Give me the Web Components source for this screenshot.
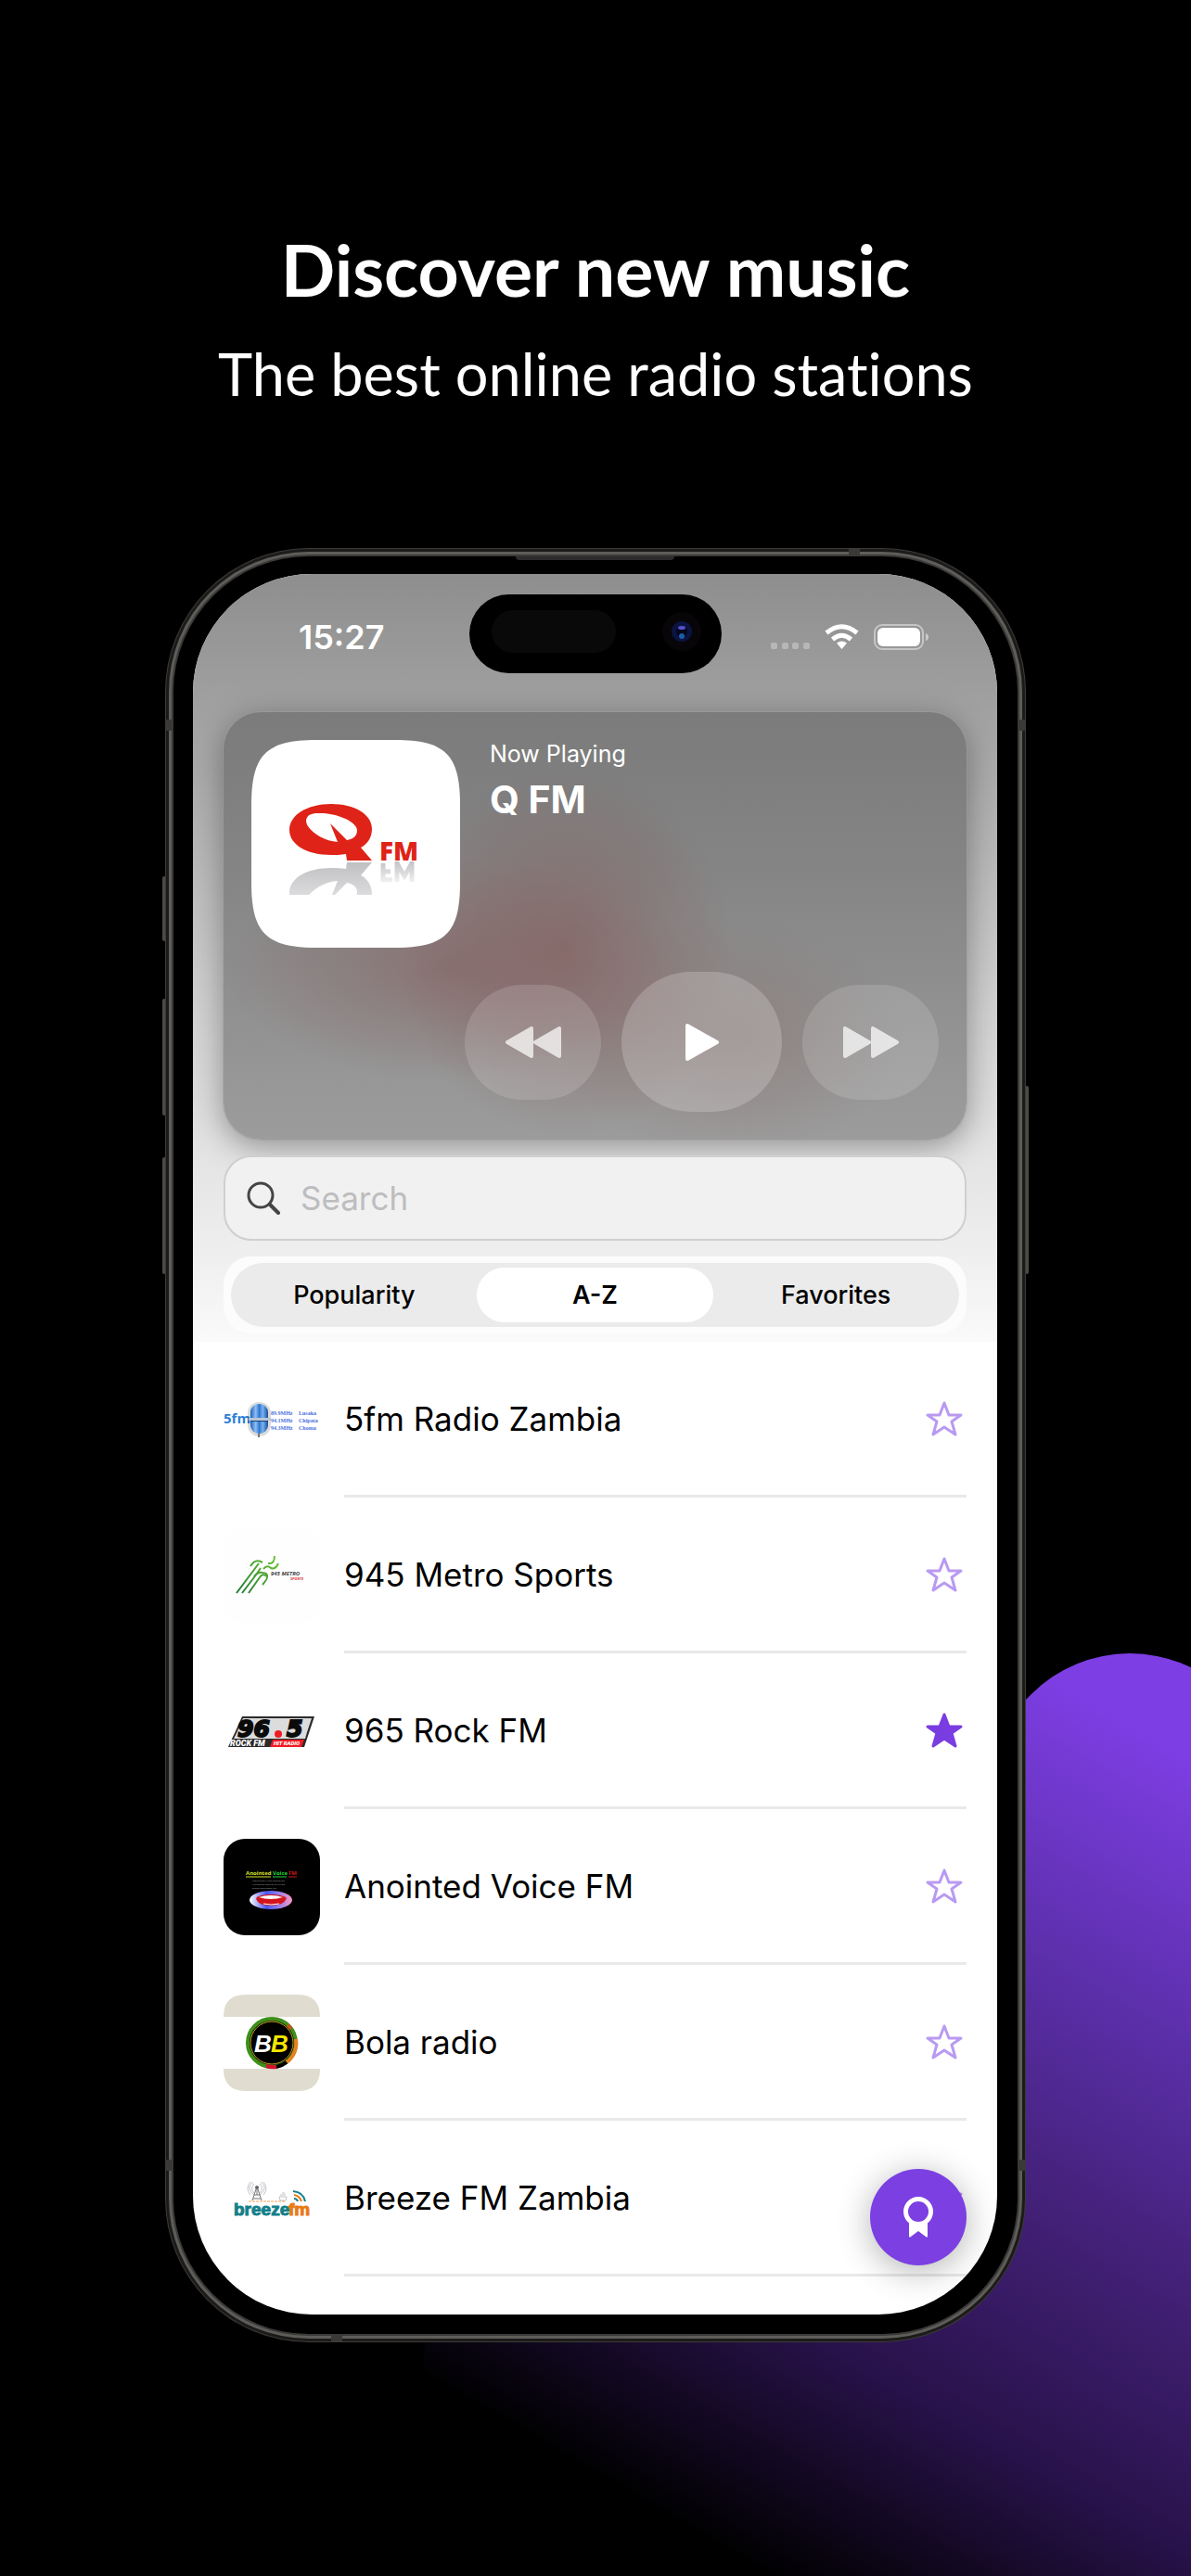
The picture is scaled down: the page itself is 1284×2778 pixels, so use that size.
<!DOCTYPE html>
<html lang="en">
<head>
<meta charset="utf-8">
<meta name="viewport" content="width=device-width, initial-scale=1">
<title>Discover new music</title>
<style>
  html { background: #000; }
  body { margin: 0; }
</style>
</head>
<body>
<promo-page>
  <h1 slot="title">Discover new music</h1>
  <p slot="subtitle">The best online radio stations</p>

  <phone-frame>
    <status-bar slot="header" time="15:27"></status-bar>
    <now-playing slot="header" label="Now Playing" station="Q FM"></now-playing>
    <search-field slot="header" placeholder="Search"></search-field>
    <sort-tabs slot="header" options="Popularity,A-Z,Favorites" selected="A-Z"></sort-tabs>

    <station-row>5fm Radio Zambia
      <svg slot="logo" viewBox="0 0 104 104" aria-hidden="true">
        <defs><linearGradient id="mic"><stop offset="0" stop-color="#1d62b8"/><stop offset=".3" stop-color="#8fc0f5"/><stop offset=".5" stop-color="#2f78d0"/><stop offset=".7" stop-color="#7db2ee"/><stop offset="1" stop-color="#154f9e"/></linearGradient></defs>
        <text x="0" y="56" font-family="Open Sans, sans-serif" font-weight="700" font-size="15" fill="#2f7fd6">5fm</text>
        <rect x="26" y="33" width="25" height="37" rx="12" fill="#000" opacity=".14"/>
        <rect x="29" y="35" width="19" height="32" rx="9" fill="url(#mic)"/>
        <rect x="27" y="50" width="24" height="3" rx="1" fill="#b9c6d6"/>
        <rect x="29" y="53" width="19" height="1" fill="#16407c"/>
        <path d="M38 67v4" stroke="#777" stroke-width="2"/>
        <g font-family="Liberation Serif, serif" font-weight="700" font-size="6" fill="#4a70dc"><text x="51" y="47">89.9MHz</text><text x="81" y="47">Lusaka</text><text x="51" y="55">94.1MHz</text><text x="81" y="55">Chipata</text><text x="51" y="63">94.3MHz</text><text x="81" y="63">Choma</text></g>
      </svg>
    </station-row>
    <station-row>945 Metro Sports
      <svg slot="logo" viewBox="0 0 104 104" aria-hidden="true">
        <defs><linearGradient id="run" gradientUnits="userSpaceOnUse" x1="14" y1="71" x2="59" y2="33"><stop offset="0" stop-color="#1f7a33"/><stop offset="1" stop-color="#6fc437"/></linearGradient></defs>
        <rect width="104" height="104" rx="22" fill="#fefefe"/>
        <g fill="none" stroke="url(#run)" stroke-width="2"><path d="M29 42q5-8 11-5l2 1"/><path d="M48 39q7 1 7-8"/><path d="M43 45q4-5 8-1q5 2 8-5"/><path d="M14 71L38 39"/><path d="M20 71L36 50l4-6"/><path d="M27 71L39 54q3-5 8-1q1 2-5 9"/><path d="M33 53q4-5 9-4q6 0 5 5"/></g>
        <text x="51" y="52" font-family="Open Sans, sans-serif" font-weight="700" font-style="italic" font-size="6" fill="#444">945 METRO</text>
        <text x="72" y="57" font-family="Open Sans, sans-serif" font-weight="700" font-style="italic" font-size="4" fill="#e0303a">SPORTS</text>
      </svg>
    </station-row>
    <station-row favorite>965 Rock FM
      <svg slot="logo" viewBox="0 0 104 104" aria-hidden="true">
        <path d="M20 36H98L92 54L87 69H5L9 60L12 54Z" fill="#2b2b2b"/>
        <path d="M21 38H95L90 53L88 60H11L14 54Z" fill="#dcdcdc"/>
        <g font-family="DejaVu Sans, sans-serif" font-weight="700" font-style="italic" font-size="25" fill="#0b0b0b" stroke="#0b0b0b" stroke-width="2"><text x="15" y="58">96</text><text x="68" y="58">5</text></g>
        <path d="M53 61H87L84 69H50Z" fill="#ee1c25"/>
        <circle cx="59" cy="55" r="4" fill="#ee1c25"/>
        <text x="7" y="68" font-family="Roboto, sans-serif" font-weight="900" font-style="italic" font-size="9" fill="#fff">ROCK FM</text>
        <text x="54" y="67" font-family="Roboto, sans-serif" font-weight="900" font-style="italic" font-size="6" fill="#fff">HIT RADIO</text>
      </svg>
    </station-row>
    <station-row>Anointed Voice FM
      <svg slot="logo" viewBox="0 0 104 104" aria-hidden="true">
        <defs><linearGradient id="ring"><stop offset="0" stop-color="#fff"/><stop offset=".4" stop-color="#4a55f0"/><stop offset=".65" stop-color="#8a7bf0"/><stop offset="1" stop-color="#f59ac4"/></linearGradient></defs>
        <rect width="104" height="104" rx="23" fill="#000"/>
        <g font-family="Open Sans, sans-serif" font-weight="700" font-size="6"><text x="24" y="39" fill="#d8e02a">Anointed</text><text x="53" y="39" fill="#22d63a">Voice</text><text x="70" y="39" fill="#c81a1a">FM</text></g>
        <path d="M24 41H51" stroke="#d8e02a"/><path d="M53 41H68" stroke="#22d63a"/><path d="M70 41H79" stroke="#c81a1a"/>
        <g font-family="Lato, sans-serif" font-size="2" fill="#aaa"><text x="31" y="46">Praise the Lord! My soul, praise the Lord</text><text x="31" y="50">I will praise the Lord all my life I will sing</text><text x="31" y="54">praises to him as long as I live.</text></g>
        <ellipse cx="51" cy="66" rx="23" ry="10" fill="url(#ring)"/>
        <path d="M35 64q4-4 16-4t17 4q-3 8-17 8t-16-8Z" fill="#d4141c"/>
        <path d="M38 63q6-2 13-2t13 2q-6 2-13 2t-13-2Z" fill="#fff"/>
        <path d="M43 70q8 2 17 0" stroke="#fff" fill="none"/>
      </svg>
    </station-row>
    <station-row>Bola radio
      <svg slot="logo" viewBox="0 0 104 104" aria-hidden="true">
        <path d="M0 24Q0 0 24 0H80Q104 0 104 24Z" fill="#e0dccf"/><path d="M0 80Q0 104 24 104H80Q104 104 104 80Z" fill="#e0dccf"/>
        <circle cx="52" cy="52" r="26" fill="#000" stroke="#3f8f1a" stroke-width="4"/>
        <path d="M78 48A26 26 0 0 1 68 73" stroke="#e8801c" stroke-width="4" fill="none"/>
        <path d="M68 73A26 26 0 0 1 57 78" stroke="#000" stroke-width="4" fill="none"/>
        <path d="M57 78A26 26 0 0 1 46 77" stroke="#d8102c" stroke-width="4" fill="none"/>
        <path d="M69 33A26 26 0 0 1 73 37" stroke="#c2561c" stroke-width="4" fill="none"/>
        <circle cx="52" cy="52" r="23" fill="none" stroke="#c8a81e"/>
        <text x="33" y="62" font-family="Liberation Sans, sans-serif" font-weight="700" font-style="italic" font-size="26" fill="#fff">B</text>
        <text x="51" y="62" font-family="Liberation Sans, sans-serif" font-weight="700" font-style="italic" font-size="26" fill="#f5e500">B</text>
      </svg>
    </station-row>
    <station-row>Breeze FM Zambia
      <svg slot="logo" viewBox="0 0 104 104" aria-hidden="true">
        <g fill="none" stroke="#c4c4cc"><path d="M32 34q-9 6 1 14M29 34q-6 7 0 14M33 36q-5 5 0 10M40 34q9 6-1 14M43 34q6 7 0 14M39 36q5 5 0 10"/></g>
        <path d="M36 39L31 54M36 39L41 54M33 48h6M32 52h8M36 39v9" stroke="#777" fill="none"/><circle cx="36" cy="40" r="2" fill="#666"/>
        <path d="M60 50h8l-1 4h-6ZM61 48h6M63 46h3" fill="none" stroke="#c4c4c4"/>
        <path d="M27 55H67" stroke="#f0a35c" stroke-dasharray="3 1"/>
        <g fill="none" stroke-width="2"><path d="M76 48q6 1 8 7" stroke="#ea7a12"/><path d="M76 52q3 0 4 3" stroke="#13808a"/><path d="M75 44q11 1 13 11" stroke="#13808a"/></g>
        <g font-family="Liberation Sans, sans-serif" font-weight="700" font-size="19" stroke-width="1"><text x="11" y="70" fill="#13808a" stroke="#13808a">breeze</text>
        <text x="70" y="70" fill="#ea7a12" stroke="#ea7a12">fm</text></g>
      </svg>
    </station-row>

    <award-button slot="floating"></award-button>
  </phone-frame>
</promo-page>

<script>
const define = (name, markup, setup) => {
  const template = document.createElement('template');
  template.innerHTML = markup;
  customElements.define(name, class extends HTMLElement {
    constructor() {
      super();
      this.attachShadow({ mode: 'open' }).append(template.content.cloneNode(true));
    }
    connectedCallback() { if (setup) setup(this, this.shadowRoot); }
  });
};

define('promo-page', `
<style>
  :host { display: block; position: relative; overflow: hidden; min-height: 100vh; background: #000; color: #fff; font-family: Inter, "Liberation Sans", sans-serif; }
  .glow { position: absolute; right: 0; bottom: 0; width: 884px; height: 1038px; }
  main { position: relative; }
  header { display: flex; flex-direction: column; align-items: center; gap: 27px; padding: 244px 24px 148px; text-align: center; font-family: Lato, "Open Sans", sans-serif; font-variant-ligatures: none; }
  ::slotted(h1) { margin: 0; font-size: 77px; line-height: 92px; font-weight: 700; }
  ::slotted(p) { margin: 0; font-size: 63px; line-height: 80px; font-weight: 400; }
</style>
<svg class="glow" viewBox="400 1740 884 1038" aria-hidden="true">
  <defs><linearGradient id="g" gradientUnits="userSpaceOnUse" gradientTransform="rotate(-45 1218 2544)" x1="1284" y1="1898" x2="789" y2="2755"><stop offset="0" stop-color="#7d3ee3"/><stop offset=".25" stop-color="#5e30ae"/><stop offset=".5" stop-color="#432178"/><stop offset=".75" stop-color="#28124a"/><stop offset="1" stop-color="#000"/></linearGradient></defs>
  <rect x="636" y="1962" width="1164" height="1164" rx="150" transform="rotate(45 1218 2544)" fill="url(#g)"/>
</svg>
<main>
  <header><slot name="title"></slot><slot name="subtitle"></slot></header>
  <slot></slot>
</main>`);

define('phone-frame', `
<style>
  :host { display: block; position: relative; box-sizing: border-box; max-width: 928px; margin: 0 auto; padding: 9px; }
  .key { position: absolute; width: 4px; background: #4b4a47; border-radius: 2px; }
  .left { left: -3px; }
  .right { right: -3px; }
  .bezel { position: relative; padding: 19px 22px 21px 21px; border-radius: 146px; background: #000; box-shadow: 0 0 0 2px #3b3a38, 0 0 0 5px #5e5d5a, 0 0 0 8px #1c1b1a, 0 0 0 9px #3c3b38; }
  .speaker { position: absolute; top: 0; left: 50%; width: 171px; height: 4px; margin-left: -86px; background: #2c2c2c; border-radius: 0 0 4px 4px; }
  .band { position: absolute; background: #3a3937; }
  .side { width: 9px; height: 12px; }
  .cap { width: 12px; height: 8px; }
  .screen { position: relative; overflow: hidden; border-radius: 128px; background: #fff; color: #000; padding-bottom: 41px; }
  .top { display: flex; flex-direction: column; gap: 17px; padding: 0 33px 9px; background: linear-gradient(#8e8e8e 0, #9e9e9e 15%, #b2b2b2 32%, #cfcfcf 55%, #e3e3e3 75%, #f1f1f1 91%, #fafafa 100%); }
  ::slotted(status-bar) { margin: 0 -33px -17px; }
  .list { padding: 0 33px; }
  .float { position: absolute; right: 33px; bottom: 53px; }
</style>
<span class="key left" style="top:354px;height:70px"></span>
<span class="key left" style="top:486px;height:126px"></span>
<span class="key left" style="top:657px;height:126px"></span>
<span class="key right" style="top:580px;height:203px"></span>
<div class="bezel">
  <span class="band side" style="left:-9px;top:176px"></span><span class="band side" style="right:-9px;top:176px"></span>
  <span class="band side" style="left:-9px;bottom:176px"></span><span class="band side" style="right:-9px;bottom:176px"></span>
  <span class="band cap" style="right:170px;top:-8px"></span><span class="band cap" style="left:170px;bottom:-8px"></span>
  <span class="speaker"></span>
  <div class="screen">
    <div class="top"><slot name="header"></slot></div>
    <div class="list" role="list"><slot></slot></div>
    <div class="float"><slot name="floating"></slot></div>
  </div>
</div>`);

define('status-bar', `
<style>
  :host { display: grid; grid-template-columns: 1fr 272px 1fr; align-items: center; height: 85px; padding: 22px 0 42px; color: #fff; }
  time { justify-self: end; margin-right: 91px; padding-top: 6px; font-size: 36px; line-height: 44px; font-weight: 600; }
  .island { display: flex; align-items: center; justify-content: space-between; box-sizing: border-box; height: 85px; padding: 0 22px 5px 24px; border-radius: 43px; background: #000; }
  .sensor { width: 134px; height: 46px; border-radius: 23px; background: #090909; }
  .icons { display: flex; align-items: end; gap: 16px; margin-left: 53px; padding-top: 6px; }
  svg { display: block; }
</style>
<time></time>
<div class="island"><span class="sensor"></span>
  <svg width="42" height="42" viewBox="0 0 42 42" aria-hidden="true"><circle cx="21" cy="21" r="21" fill="#070507"/><circle cx="21" cy="21" r="11" fill="#0b1440"/><circle cx="21" cy="21" r="6" fill="#05071c"/><ellipse cx="21" cy="17" rx="4" ry="2" fill="#5b4fd0"/><circle cx="21" cy="26" r="3" fill="#1d5aa8"/></svg>
</div>
<div class="icons">
  <svg width="42" height="28" viewBox="0 0 42 28" fill="#fff" opacity=".3" aria-hidden="true"><rect y="20" width="7" height="7" rx="2"/><rect x="12" y="20" width="7" height="7" rx="2"/><rect x="23" y="20" width="7" height="7" rx="2"/><rect x="35" y="20" width="7" height="7" rx="2"/></svg>
  <svg width="37" height="28" viewBox="0 0 37 28" aria-hidden="true"><g fill="none" stroke="#fff" stroke-width="5"><path d="M2 9.500Q18.500-4 35 9.500"/><path d="M8.500 16.500Q18.500 8 28.500 16.500"/></g><path d="M13 20.500Q18.500 16.500 24 20.500L18.500 27Z" fill="#fff"/></svg>
  <svg width="60" height="28" viewBox="0 0 60 28" aria-hidden="true"><rect x="1" y="1" width="52" height="26" rx="8" fill="none" stroke="#fff" stroke-opacity=".45" stroke-width="2"/><rect x="4" y="4" width="46" height="20" rx="6" fill="#fff"/><path d="M56 10q3 1 3 4t-3 4Z" fill="#fff" opacity=".5"/></svg>
</div>`, (host, root) => {
  root.querySelector('time').textContent = host.getAttribute('time');
});

define('now-playing', `
<style>
  :host { display: grid; grid-template-columns: 225px 1fr; column-gap: 32px; grid-template-rows: 1fr auto; box-sizing: border-box; height: 461px; padding: 30px; border-radius: 40px; color: #fff;
    background:
      radial-gradient(ellipse 180px 200px at 46% 56%, rgba(132,85,85,.5), rgba(132,85,85,.28) 50%, rgba(132,85,85,0)),
      radial-gradient(ellipse 240px 120px at 30% 60%, rgba(132,85,85,.45), rgba(132,85,85,.2) 55%, rgba(132,85,85,0)),
      radial-gradient(ellipse 190px 130px at 68% 76%, rgba(130,95,90,.32), rgba(130,95,90,0)),
      linear-gradient(#7b7b7b, #848484 35%, #8f8f8f 65%, #9c9c9c);
    box-shadow: 0 0 0 1px rgba(160,160,160,.5), 0 8px 34px rgba(0,0,0,.36); }
  .art { display: block; width: 225px; height: 224px; }
  .label { margin: 0; font-size: 25px; line-height: 30px; }
  h2 { margin: 9px 0 0; font-size: 41px; line-height: 50px; font-weight: 700; }
  .controls { grid-column: 1 / -1; display: flex; justify-content: flex-end; align-items: center; gap: 22px; }
  button { display: grid; place-items: center; width: 147px; height: 124px; padding: 0; border: 0; border-radius: 62px; background: rgba(255,255,255,.14); color: #fff; }
  .play { width: 173px; height: 151px; border-radius: 76px; background: rgba(255,255,255,.2); }
  .controls svg { display: block; fill: currentColor; stroke: currentColor; stroke-width: 4; stroke-linejoin: round; opacity: .72; }
  .controls .play svg { opacity: 1; }
</style>
<svg class="art" viewBox="0 0 225 224" role="img" aria-label="Q FM logo">
  <defs><linearGradient id="fade" x1="0" y1="0" x2="0" y2="1"><stop offset="0" stop-color="#e4e4e6"/><stop offset="1" stop-color="#8c8c92"/></linearGradient>
  <linearGradient id="fade2" gradientUnits="userSpaceOnUse" x1="0" y1="131" x2="0" y2="156"><stop offset="0" stop-color="#9a9aa0"/><stop offset="1" stop-color="#f0f0f0"/></linearGradient>
  <clipPath id="cut"><rect x="35" y="131" width="150" height="36"/></clipPath></defs>
  <path d="M0 70C0 16 16 0 70 0H155C209 0 225 16 225 70V154C225 208 209 224 155 224H70C16 224 0 208 0 154Z" fill="#fff"/>
  <path fill-rule="evenodd" fill="#df2318" d="M86 69C111 69 130 80 130 96C130 106 124 113 118 116L130 130H103L102 123C96 124 91 124 86 124C60 124 41 113 41 97C41 81 60 69 86 69ZM72 79C59 79 57 86 61 93C67 102 80 109 93 110L85 90L103 108C112 107 116 100 113 94C108 85 87 78 72 79Z"/>
  <text x="138" y="130" font-family="Open Sans, sans-serif" font-weight="800" font-size="28" fill="#df2318">FM</text>
  <g clip-path="url(#cut)"><path transform="translate(0 262) scale(1 -1)" fill-rule="evenodd" fill="url(#fade)" opacity=".55" d="M86 69C111 69 130 80 130 96C130 106 124 113 118 116L130 130H103L102 123C96 124 91 124 86 124C60 124 41 113 41 97C41 81 60 69 86 69ZM72 79C59 79 57 86 61 93C67 102 80 109 93 110L85 90L103 108C112 107 116 100 113 94C108 85 87 78 72 79Z"/>
  <path d="M142 133v20M142 151h10M142 142h8M157 153v-20l8 14l8-14v20" fill="none" stroke="url(#fade2)" stroke-width="5" opacity=".6"/></g>
</svg>
<div class="info"><p class="label"></p><h2></h2></div>
<div class="controls">
  <button aria-label="Previous"><svg width="62" height="36" viewBox="0 0 62 36"><path d="M29 3V33L3 18ZM59 3V33L33 18Z"/></svg></button>
  <button class="play" aria-label="Play"><svg width="38" height="42" viewBox="0 0 38 42"><path d="M3 3V39L35 21Z"/></svg></button>
  <button aria-label="Next"><svg width="62" height="36" viewBox="0 0 62 36"><path d="M3 3V33L29 18ZM33 3V33L59 18Z"/></svg></button>
</div>`, (host, root) => {
  root.querySelector('.label').textContent = host.getAttribute('label');
  root.querySelector('h2').textContent = host.getAttribute('station');
});

define('search-field', `
<style>
  :host { display: block; }
  label { display: flex; align-items: center; gap: 22px; box-sizing: border-box; height: 92px; padding: 0 23px; border: 2px solid #cfcfcf; border-radius: 30px; background: #f1f1f1; }
  svg { flex: none; display: block; }
  input { flex: 1; min-width: 0; border: 0; padding: 0; background: none; outline: 0; font: 400 35px/44px Inter, "Liberation Sans", sans-serif; color: #000; }
  input::placeholder { color: #bdbdbf; opacity: 1; }
</style>
<label><svg width="36" height="36" viewBox="0 0 36 36" fill="none" stroke="#454545" stroke-linecap="round" aria-hidden="true"><circle cx="15" cy="15" r="13" stroke-width="3"/><path d="M25 25L34 34" stroke-width="4"/></svg>
<input type="search" aria-label="Search stations"></label>`, (host, root) => {
  root.querySelector('input').placeholder = host.getAttribute('placeholder');
});

define('sort-tabs', `
<style>
  :host { display: block; box-sizing: border-box; padding: 7px 8px; border-radius: 30px; background: #fcfcfc; }
  fieldset { display: grid; grid-template-columns: repeat(3, 1fr); gap: 4px; margin: 0; padding: 5px; border: 0; border-radius: 35px; background: #ebebeb; }
  label { display: grid; place-items: center; height: 59px; border-radius: 30px; font-size: 27px; line-height: 32px; font-weight: 500; color: #000; }
  label:has(:checked) { background: #fff; font-weight: 600; }
  input { position: absolute; appearance: none; width: 0; height: 0; margin: 0; }
</style>
<fieldset aria-label="Sort stations"></fieldset>`, (host, root) => {
  const set = root.querySelector('fieldset');
  for (const name of host.getAttribute('options').split(',')) {
    const label = document.createElement('label');
    const input = document.createElement('input');
    input.type = 'radio';
    input.name = 'sort';
    input.checked = name === host.getAttribute('selected');
    label.append(input, name);
    set.append(label);
  }
});

define('station-row', `
<style>
  :host { display: grid; grid-template-columns: 104px 1fr; column-gap: 26px; height: 168px; }
  .logo { display: grid; align-items: center; }
  ::slotted(svg) { display: block; width: 104px; height: 104px; }
  .body { display: flex; align-items: center; justify-content: space-between; border-bottom: 3px solid #e9e9e9; padding-right: 3px; }
  .name { font-size: 35px; line-height: 44px; }
  button { padding: 0; border: 0; background: none; }
  button svg { display: block; fill: none; stroke: #b99af2; stroke-width: 3; stroke-linejoin: round; }
  button[aria-pressed=true] svg { fill: #7a3de2; stroke: #7a3de2; }
</style>
<div class="logo"><slot name="logo"></slot></div>
<div class="body"><span class="name"><slot></slot></span>
<button aria-label="Favorite" aria-pressed="false"><svg width="42" height="40" viewBox="0 0 42 40"><path d="M21 3L26 16H39L29 23L33 37L21 29L9 37L13 23L3 16H16Z"/></svg></button></div>`, (host, root) => {
  host.setAttribute('role', 'listitem');
  const button = root.querySelector('button');
  button.setAttribute('aria-pressed', host.hasAttribute('favorite'));
  button.addEventListener('click', () => button.setAttribute('aria-pressed', button.getAttribute('aria-pressed') !== 'true'));
});

define('award-button', `
<style>
  :host { display: block; }
  button { display: grid; place-items: center; width: 104px; height: 104px; padding: 0; border: 0; border-radius: 50%; background: #7b3fe2; box-shadow: 0 6px 36px rgba(0,0,0,.3); }
  svg { display: block; }
</style>
<button aria-label="Awards"><svg width="34" height="46" viewBox="0 0 34 46" aria-hidden="true"><path d="M7 27H27V43Q27 46 25 44L17 38L9 44Q7 46 7 43Z" fill="#fff"/><circle cx="17" cy="17" r="13.500" fill="#7b3fe2" stroke="#fff" stroke-width="5"/></svg></button>`);
</script>
</body>
</html>
